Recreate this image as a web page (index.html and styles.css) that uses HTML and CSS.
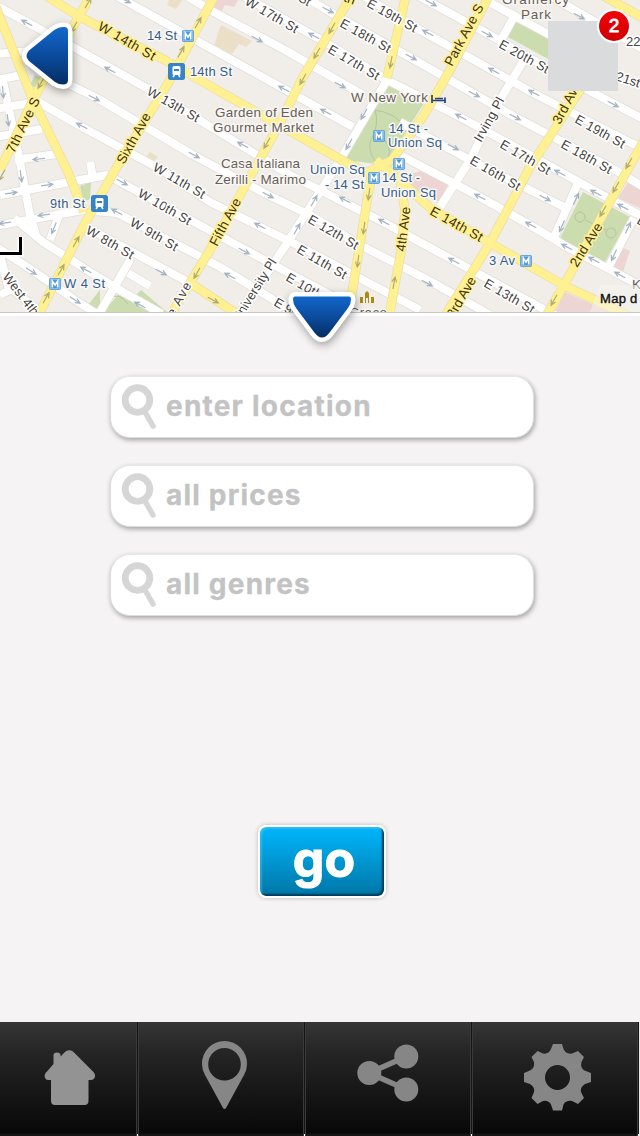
FILE: index.html
```html
<!DOCTYPE html>
<html lang="en">
<head>
<meta charset="utf-8">
<title>Find places</title>
<link rel="stylesheet" href="styles.css">
</head>
<body>
<main class="screen">
<section class="map">
<svg class="map-art" width="640" height="312" viewBox="0 0 640 312">
<defs>
<g id="arr"><path d="M-6 0H5M1-2.4L6 0L1 2.4"/></g>
<g id="metro"><rect width="12" height="12" rx="2" fill="#4d97d8"/><rect x="1.2" y="1.2" width="9.6" height="9.6" rx="1" fill="none" stroke="#b9d8f1" stroke-width=".8"/><path d="M3.300 9.500V3L6 7L8.700 3V9.500" fill="none" stroke="#fff" stroke-width="1.6"/></g>
<g id="train"><rect width="17" height="17" rx="2.5" fill="#3584ca"/><rect x="4.5" y="3" width="8" height="9" rx="1.5" fill="#fff"/><path d="M6 6H11V8H6Z" fill="#3584ca"/><path d="M5 14L6.5 12M12 14L10.5 12" stroke="#fff" stroke-width="1.5"/></g>
</defs>
<rect width="640" height="312" fill="#f1eee9"/>
<g class="ground">
<g fill="#ecdfc7"><path d="M221 25L252 41L246 47L239 44L232 54L214 45Z"/><path d="M170-2H184L176 9L167 5Z"/><path d="M150 152L158 157L154 161L146 157Z"/></g>
<g fill="#ecd5d3"><path d="M212-1H239L234 7L225 5L221 12L210 7Z"/><path d="M420 171L448 184L440 202L410 190L405 176Z"/><path d="M628 182L640 188V208L618 198Z"/><path d="M621 247L630 251L623 272L612 267Z"/><path d="M565 292L610 312H555Z"/></g>
<g fill="#cbdcae"><path d="M387 82L426 100L385 165L345 160Z"/><path d="M583 192L630 217L605 262L560 238Z"/><path d="M515 22L550 38V60L508 37Z"/><path d="M80 186L91 182L90 199L84 202Z"/><path d="M100 290L88 305L100 309ZM103 312L118 295L132 299L141 290L167 312Z"/><path d="M35 75L46 80L38 89L30 85Z"/></g>
<g fill="none" stroke="#b6c59b" stroke-width="1"><path d="M374 110Q395 112 407 129M375 110Q380 125 370 142Q368 156 380 166M385 140Q395 155 383 162"/><circle cx="580" cy="217" r="5"/><circle cx="611" cy="233" r="5"/><path d="M585 220L606 230M108 300Q118 290 128 304"/></g>
<g class="white-edge">
<path id="w" d="M-5 5L75 48L150 90L290 175L383 222L453 260L560 318M35 100L82 127L160 169L210 202L297 245L420 310M60 80L97 98L193 155L268 195L310 215L360 245L430 281L490 315M115-5L210 48L353 127M185-5L210 10L285 50L363 95M240-6L330 45L387 80L460 117L550 166L597 192L645 218M300-6L340 18L420 63L515 117L612 168L645 188M362-5L420 30L533 93L645 150M415-6L490 35L550 70L645 120M485 0L550 35M550-4L645 50M400 122L470 160L570 210M400 155L480 197L530 225L567 247L645 288M0 195L107 175L120 182L220 236L285 271L340 300M-5 226L83 210L117 213L220 267L300 316M84 226L190 283M14 218L43 242L87 270L123 292L162 314M-5 246L32 270L75 300L100 316M387 80L340 160L323 187L287 243L240 314M524 60L500 100L470 160L440 207M577 185L552 242M634 218L607 270M130 260L99 314M128 273L150 286M515 15L500 42M-5 54L30 51M-5 80L22 75M-5 109L37 102M-5 137L42 129M15 160L57 154M2 76L20 162L30 216L36 235M90 162L93 178M59 215L50 240M0 255L8 286L38 310M0 295L20 285"/>
</g>
<use href="#w" class="white-road"/>
<g class="yellow-edge"><path id="y" d="M45-5L80 17L165 60L210 86L345 162L370 174M-5 5L33 100L67 170L84 212M88 0L33 100L0 170M215-5L170 80L115 170L83 227L38 316M352-5L303 77L280 123L250 177L210 250L170 316M406-5L387 78M490-6L450 70L424 115L392 160L365 174M372 172L368 195L350 305M376 160L400 180L430 208L490 243L563 285L640 321M400 180L405 210L401 252L389 316M620 7L580 90L530 167L490 243L445 316M645 139L633 160L563 287L545 318M602-5L645 19M190 283L240 316"/></g>
<use href="#y" class="yellow-road"/>
<g class="arrows">
<use href="#arr" transform="translate(27 23) rotate(208)"/><use href="#arr" transform="translate(110 70) rotate(208)"/><use href="#arr" transform="translate(94 98) rotate(28)"/><use href="#arr" transform="translate(82 126) rotate(208)"/><use href="#arr" transform="translate(194 155) rotate(28)"/><use href="#arr" transform="translate(125 0) rotate(28)"/><use href="#arr" transform="translate(257 39) rotate(28)"/><use href="#arr" transform="translate(328 10) rotate(28)"/><use href="#arr" transform="translate(314 36) rotate(208)"/><use href="#arr" transform="translate(340 85) rotate(28)"/><use href="#arr" transform="translate(284 89) rotate(208)"/><use href="#arr" transform="translate(326 112) rotate(208)"/><use href="#arr" transform="translate(243 145) rotate(208)"/><use href="#arr" transform="translate(411 57) rotate(28)"/><use href="#arr" transform="translate(364 114) rotate(120)"/><use href="#arr" transform="translate(349 144) rotate(120)"/>
<use href="#arr" transform="translate(431 3) rotate(28)"/><use href="#arr" transform="translate(428 33) rotate(208)"/><use href="#arr" transform="translate(487 34) rotate(28)"/><use href="#arr" transform="translate(579 16) rotate(28)"/><use href="#arr" transform="translate(494 71) rotate(208)"/><use href="#arr" transform="translate(474 94) rotate(28)"/><use href="#arr" transform="translate(534 93) rotate(208)"/><use href="#arr" transform="translate(515 117) rotate(28)"/><use href="#arr" transform="translate(461 117) rotate(208)"/><use href="#arr" transform="translate(453 147) rotate(28)"/><use href="#arr" transform="translate(613 104) rotate(28)"/><use href="#arr" transform="translate(560 173) rotate(208)"/><use href="#arr" transform="translate(545 198) rotate(28)"/><use href="#arr" transform="translate(596 193) rotate(208)"/><use href="#arr" transform="translate(623 207) rotate(208)"/><use href="#arr" transform="translate(480 197) rotate(208)"/><use href="#arr" transform="translate(531 225) rotate(208)"/><use href="#arr" transform="translate(567 247) rotate(208)"/><use href="#arr" transform="translate(594 260) rotate(208)"/><use href="#arr" transform="translate(620 275) rotate(208)"/><use href="#arr" transform="translate(454 261) rotate(208)"/><use href="#arr" transform="translate(427 283) rotate(28)"/>
<use href="#arr" transform="translate(576 199) rotate(-65)"/><use href="#arr" transform="translate(562 226) rotate(115)"/><use href="#arr" transform="translate(628 228) rotate(-65)"/><use href="#arr" transform="translate(614 255) rotate(115)"/>
<use href="#arr" transform="translate(268 195) rotate(28)"/><use href="#arr" transform="translate(345 200) rotate(208)"/><use href="#arr" transform="translate(384 222) rotate(208)"/><use href="#arr" transform="translate(260 226) rotate(208)"/><use href="#arr" transform="translate(244 251) rotate(28)"/><use href="#arr" transform="translate(230 276) rotate(208)"/><use href="#arr" transform="translate(314 201) rotate(-60)"/><use href="#arr" transform="translate(297 229) rotate(-60)"/>
<use href="#arr" transform="translate(122 182) rotate(28)"/><use href="#arr" transform="translate(117 212) rotate(208)"/><use href="#arr" transform="translate(161 272) rotate(28)"/><use href="#arr" transform="translate(86 270) rotate(208)"/><use href="#arr" transform="translate(31 271) rotate(33)"/><use href="#arr" transform="translate(75 300) rotate(33)"/><use href="#arr" transform="translate(140 305) rotate(208)"/><use href="#arr" transform="translate(47 185) rotate(-8)"/><use href="#arr" transform="translate(11 193) rotate(-8)"/><use href="#arr" transform="translate(44 215) rotate(172)"/><use href="#arr" transform="translate(5 223) rotate(172)"/><use href="#arr" transform="translate(21 176) rotate(82)"/><use href="#arr" transform="translate(54 228) rotate(112)"/><use href="#arr" transform="translate(3 92) rotate(85)"/><use href="#arr" transform="translate(8 120) rotate(82)"/><use href="#arr" transform="translate(39 159) rotate(174)"/>
</g>
<g class="arrows arrows-ave">
<use href="#arr" transform="translate(88 3) rotate(-60)"/><use href="#arr" transform="translate(74 27) rotate(120)"/><use href="#arr" transform="translate(41 83) rotate(120)"/><use href="#arr" transform="translate(198 23) rotate(-60)"/><use href="#arr" transform="translate(181 52) rotate(-60)"/><use href="#arr" transform="translate(332 28) rotate(120)"/><use href="#arr" transform="translate(317 53) rotate(120)"/><use href="#arr" transform="translate(303 79) rotate(120)"/><use href="#arr" transform="translate(267 143) rotate(120)"/><use href="#arr" transform="translate(391 62) rotate(100)"/><use href="#arr" transform="translate(76 242) rotate(-60)"/><use href="#arr" transform="translate(61 270) rotate(-60)"/><use href="#arr" transform="translate(46 298) rotate(-60)"/><use href="#arr" transform="translate(197 273) rotate(120)"/><use href="#arr" transform="translate(213 300) rotate(28)"/><use href="#arr" transform="translate(369 194) rotate(98)"/><use href="#arr" transform="translate(364 228) rotate(98)"/><use href="#arr" transform="translate(358 261) rotate(98)"/><use href="#arr" transform="translate(394 283) rotate(-80)"/><use href="#arr" transform="translate(629 163) rotate(120)"/><use href="#arr" transform="translate(616 187) rotate(120)"/><use href="#arr" transform="translate(603 211) rotate(120)"/><use href="#arr" transform="translate(554 300) rotate(120)"/><use href="#arr" transform="translate(2 175) rotate(120)"/>
</g>
</g>
<g class="lbl street">
<text transform="translate(146 94) rotate(29.5)" textLength="58">W 13th St</text>
<text transform="translate(152 170) rotate(30)" textLength="58">W 11th St</text>
<text transform="translate(137 196) rotate(30)" textLength="59">W 10th St</text>
<text transform="translate(129 225) rotate(30)" textLength="53">W 9th St</text>
<text transform="translate(85 233) rotate(30)" textLength="53">W 8th St</text>
<text transform="translate(244 4) rotate(30)" textLength="59">W 17th St</text>
<text transform="translate(273 -13) rotate(29)" textLength="40">18th St</text>
<text transform="translate(366 6) rotate(29)" textLength="55">E 19th St</text>
<text transform="translate(339 26) rotate(29)" textLength="56">E 18th St</text>
<text transform="translate(327 52) rotate(30)" textLength="57">E 17th St</text>
<text transform="translate(498 47) rotate(29)" textLength="55">E 20th St</text>
<text transform="translate(574 122) rotate(29)" textLength="55">E 19th St</text>
<text transform="translate(560 147) rotate(29)" textLength="56">E 18th St</text>
<text transform="translate(499 147) rotate(30)" textLength="56">E 17th St</text>
<text transform="translate(469 163) rotate(30)" textLength="56">E 16th St</text>
<text transform="translate(483 286) rotate(30)" textLength="56">E 13th St</text>
<text transform="translate(307 222) rotate(30)" textLength="56">E 12th St</text>
<text transform="translate(296 252) rotate(30)" textLength="55">E 11th St</text>
<text transform="translate(285 280) rotate(30)" textLength="56">E 10th St</text>
<text transform="translate(273 305) rotate(30)" textLength="45">E 9th St</text>
<text transform="translate(615 80) rotate(18)">21st</text>
<text transform="translate(626 46)">22</text>
<text transform="translate(636 223) rotate(30)">E</text>
<text transform="translate(2 277) rotate(52)" textLength="50">West 4th</text>
<text transform="translate(481 143) rotate(-61)" textLength="49">Irving Pl</text>
<text transform="translate(239 323) rotate(-58)" textLength="72">University Pl</text>
<text transform="translate(168 328) rotate(-61)" textLength="49">ive Ave</text>
</g>
<g class="lbl avenue">
<text transform="translate(97 29) rotate(30)" textLength="64">W 14th St</text>
<text transform="translate(429 214) rotate(29)" textLength="58">E 14th St</text>
<text transform="translate(14 154) rotate(-64)" textLength="60">7th Ave S</text>
<text transform="translate(124 165) rotate(-61)" textLength="56">Sixth Ave</text>
<text transform="translate(217 247) rotate(-62)" textLength="52">Fifth Ave</text>
<text transform="translate(452 67) rotate(-62)" textLength="68">Park Ave S</text>
<text transform="translate(560 125) rotate(-62)" textLength="46">3rd Ave</text>
<text transform="translate(577 268) rotate(-58)" textLength="49">2nd Ave</text>
<text transform="translate(405 252) rotate(-83)" textLength="45">4th Ave</text>
<text transform="translate(454 319) rotate(-60)" textLength="45">3rd Ave</text>
<text transform="translate(343 1) rotate(20)">th</text>
</g>
<g class="lbl place">
<text x="215" y="117" textLength="98">Garden of Eden</text><text x="213" y="132" textLength="101">Gourmet Market</text>
<text x="221" y="168" textLength="79">Casa Italiana</text><text x="215" y="184" textLength="91">Zerilli - Marimo</text>
<text x="351" y="102" textLength="77">W New York</text>
<text x="502" y="4" textLength="67">Gramercy</text><text x="521" y="19" textLength="30">Park</text>
<text x="349" y="317" textLength="38">Grace</text><text x="632" y="289">K</text>
</g>
<g class="lbl station">
<text x="147" y="40" textLength="30">14 St</text><text x="190" y="76" textLength="42">14th St</text>
<text x="50" y="208" textLength="35">9th St</text><text x="64" y="288" textLength="41">W 4 St</text>
<text x="389" y="133" textLength="39">14 St -</text><text x="388" y="147" textLength="54">Union Sq</text>
<text x="310" y="174" textLength="55">Union Sq</text><text x="325" y="189" textLength="39">- 14 St</text>
<text x="382" y="182" textLength="38">14 St -</text><text x="381" y="197" textLength="55">Union Sq</text>
<text x="489" y="265" textLength="26">3 Av</text>
</g>
<use href="#metro" x="182" y="30"/><use href="#metro" x="373" y="130"/><use href="#metro" x="393" y="158"/><use href="#metro" x="368" y="172"/><use href="#metro" x="49" y="278"/><use href="#metro" x="520" y="255"/>
<use href="#train" x="168" y="63"/><use href="#train" x="91" y="195"/>
<path d="M432 95V103M445 97.500V103M432 100.500H445M435 98.500H443" fill="none" stroke="#28437d" stroke-width="1.7"/>
<path d="M360 303V297H363V303ZM365 303V293L367 291L369 293V303H368V298H366V303ZM371 303V297H374V303Z" fill="#ab8b13"/>
<path d="M0 253.5H20.5V237" fill="none" stroke="#fff" stroke-width="6"/><path d="M0 253.5H20.5V237" fill="none" stroke="#000" stroke-width="3"/>
<path d="M600 285H640V312H590Z" fill="#f6f3ef" opacity=".5"/>
<text class="credit" x="600" y="303">Map d</text>
</svg>
<svg class="back" width="56" height="78" viewBox="20 18 56 78">
<defs><linearGradient id="blue" x1="0" y1="0" x2="0" y2="1"><stop offset="0" stop-color="#1267cb"/><stop offset=".5" stop-color="#0b4b9d"/><stop offset="1" stop-color="#062d62"/></linearGradient></defs>
<path class="pointer" d="M64 27Q68 27 68 31V80Q68 84.500 63 84.500Q59 84.500 55 82L29 61Q24 56 29 50.500L53 31Q58 27 64 27Z"/></svg>
<div class="thumb"><span class="badge">2</span></div>
<svg class="down" width="76" height="66" viewBox="284 286 76 66"><path class="pointer" d="M295 296.500H349Q351 296.500 351 299.500Q351 304 348 308L330 332Q322 343 314 332L296 308Q293 304 293 299.500Q293 296.500 295 296.500Z"/></svg>
</section>

<section class="search">
<div class="field"><svg class="lens" width="36" height="46" viewBox="0 0 36 46"><circle cx="16.500" cy="16" r="12.300" stroke-width="6.800"/><path d="M24 28L32 42" stroke-width="5.500"/></svg><span>enter location</span></div>
<div class="field"><svg class="lens" width="36" height="46" viewBox="0 0 36 46"><circle cx="16.500" cy="16" r="12.300" stroke-width="6.800"/><path d="M24 28L32 42" stroke-width="5.500"/></svg><span>all prices</span></div>
<div class="field"><svg class="lens" width="36" height="46" viewBox="0 0 36 46"><circle cx="16.500" cy="16" r="12.300" stroke-width="6.800"/><path d="M24 28L32 42" stroke-width="5.500"/></svg><span>all genres</span></div>
<button class="go" type="button"><span>go</span></button>
</section>

<nav class="tabs">
<a class="tab"><svg width="137" height="112" viewBox="0 1022 137 112"><path fill="#939393" d="M53.500 1064V1055Q53.500 1052.500 57 1052.500Q60.500 1052.500 60.500 1055V1056.500L65.500 1051.500Q69 1049 73 1051.500L93.500 1072Q96 1075 94.500 1078Q93.500 1080 91 1080H88.500V1101Q88.500 1105 84.500 1105H55Q51 1105 51 1101V1080H48Q45.500 1080 44.800 1077Q44 1074 47 1071.500Z"/></svg></a>
<a class="tab"><svg width="166" height="112" viewBox="138 1022 166 112"><path fill="#868686" fill-rule="evenodd" d="M224.500 1041A22.500 22.500 0 0 1 247 1064Q247 1070 244 1075L226 1108Q224.500 1110 223 1108L205 1075Q202 1070 202 1064A22.500 22.500 0 0 1 224.500 1041ZM224.500 1048A16.300 16.300 0 1 0 224.500 1080.600A16.300 16.300 0 1 0 224.500 1048Z"/></svg></a>
<a class="tab"><svg width="166" height="112" viewBox="305 1022 166 112"><g fill="#868686"><path d="M406.500 1056.500L369 1073L406.500 1089.500" fill="none" stroke="#868686" stroke-width="5.500"/><circle cx="369.300" cy="1073" r="12"/><circle cx="406.300" cy="1056.400" r="12"/><circle cx="406.300" cy="1089.500" r="12"/></g></svg></a>
<a class="tab"><svg width="166" height="112" viewBox="472 1022 166 112"><path fill="#868686" fill-rule="evenodd" d="M553 1044H562L563.500 1049Q566 1054.500 572 1053.500L578 1051L584 1057L581.500 1062Q580 1068 584.500 1070.500L591 1073V1082L585 1084Q580 1087 581 1092L584 1098L578 1104L572 1101Q566 1100 563.500 1104.500L562 1110.500H553L551 1104.500Q548.500 1100 543 1101L537.500 1104L531.500 1098L534 1092Q535 1087 530 1084L524 1082V1073L530 1070.500Q535 1068 534 1062L531.500 1057L537.500 1051L543 1053.500Q548.500 1054.500 551 1049ZM557.500 1065A12.500 12.500 0 1 0 557.500 1090A12.500 12.500 0 1 0 557.500 1065Z"/></svg></a>
</nav>
</main>
</body>
</html>
```
FILE: styles.css
```css
* { box-sizing: border-box; }
body { margin: 0; background: #f5f3f4; }
.screen { width: 640px; height: 1136px; display: flex; flex-direction: column; overflow: hidden; background: #f5f3f4; }
.map { position: relative; height: 316px; flex: none; border-bottom: 3px solid #fff; background: #c9c7c4; z-index: 1; }
.map-art { display: block; }
.ground { filter: blur(.4px); }
.white-edge { fill: none; stroke: #e2ddd7; stroke-width: 9.5px; stroke-linejoin: round; }
.white-road { fill: none; stroke: #fff; stroke-width: 8px; stroke-linejoin: round; }
.yellow-edge { fill: none; stroke: #e9dea5; stroke-width: 9.5px; stroke-linejoin: round; }
.yellow-road { fill: none; stroke: #fff192; stroke-width: 8px; stroke-linejoin: round; }
#w, #y { stroke: inherit; stroke-width: inherit; }
.arrows { fill: none; stroke: #a3b3c2; stroke-width: 1.2px; }
.arrows-ave { stroke: #b0ab72; }
.lbl { font-family: "Liberation Sans", Arial, sans-serif; font-size: 13px; stroke-linejoin: round; paint-order: stroke; stroke: #fff; stroke-width: 3px; }
.street { fill: #454240; font-size: 13px; }
.avenue { fill: #40320f; stroke: #fff192; font-size: 13.5px; }
.place { fill: #675e57; stroke: #f8f6f3; font-size: 13.5px; }
.station { fill: #365c86; stroke: #f8f8f7; font-size: 13px; }
.credit { font: 13px "Liberation Sans", Arial, sans-serif; fill: #111; stroke: #111; stroke-width: .4px; letter-spacing: .3px; }
.pointer { fill: url(#blue); stroke: #fff; stroke-width: 9px; stroke-linejoin: round; paint-order: stroke; }
.back, .down { position: absolute; overflow: visible; filter: drop-shadow(1px 3px 4px rgba(0, 0, 0, .35)); }
.back { left: 20px; top: 18px; }
.down { left: 284px; top: 286px; }
.thumb { position: absolute; left: 548px; top: 21px; width: 70px; height: 70px; background: #d9dbdd; }
.badge { position: absolute; left: 49px; top: -12px; width: 34px; height: 34px; border: 2px solid #fff; border-radius: 50%; background: linear-gradient(#f40008, #cf0000); color: #fff; font: 19px/29px "Liberation Sans", Arial, sans-serif; text-align: center; -webkit-text-stroke: .8px #fff; }
.search { flex: 1; display: flex; flex-direction: column; align-items: center; padding: 60px 0 0 4px; }
.field { width: 424px; height: 62px; margin-bottom: 27px; border-radius: 20px; background: #fff; border: 1px solid #dedede; border-top-color: #e8e8e8; box-shadow: 1px 2px 5px rgba(0, 0, 0, .35); display: flex; align-items: flex-start; padding: 7px 0 0 10px; gap: 9px; }
.field span { font: 700 28px/45px Inter, sans-serif; color: #c3c3c3; letter-spacing: 1.2px; -webkit-text-stroke: .3px #c3c3c3; }
.lens { fill: none; stroke: #d6d6d6; stroke-linecap: round; flex: none; }
.go { margin: 182px 0 0; padding: 0; width: 128px; height: 73px; border: 2px solid #fff; border-radius: 8px; outline: 0; background: linear-gradient(#00b0f4 10%, #0076a6); background-clip: padding-box; box-shadow: 0 0 4px rgba(0, 0, 0, .25), inset 2px 2px 2px rgba(100, 210, 250, .4), inset -2px -2px 2px #003c58; }
.go span { display: block; color: #fff; font: 700 50px/58px Inter, sans-serif; -webkit-text-stroke: 1px #fff; letter-spacing: 0; padding: 0 0 5px 4px; }
.tabs { height: 114px; flex: none; display: flex; gap: 1px; border-right: 1px solid #e8e8e8; background: linear-gradient(#151515 112px, #fff 112px); }
.tab { width: 166px; height: 114px; flex: none; background: linear-gradient(#363636, #252525 30px, #080808 111px, #151515 112px); box-shadow: inset 1px 0 #3a3a3a, inset -1px 0 #3a3a3a; }
.tab:first-child { width: 137px; box-shadow: inset -1px 0 #3a3a3a; }
.tab svg { display: block; }
```
